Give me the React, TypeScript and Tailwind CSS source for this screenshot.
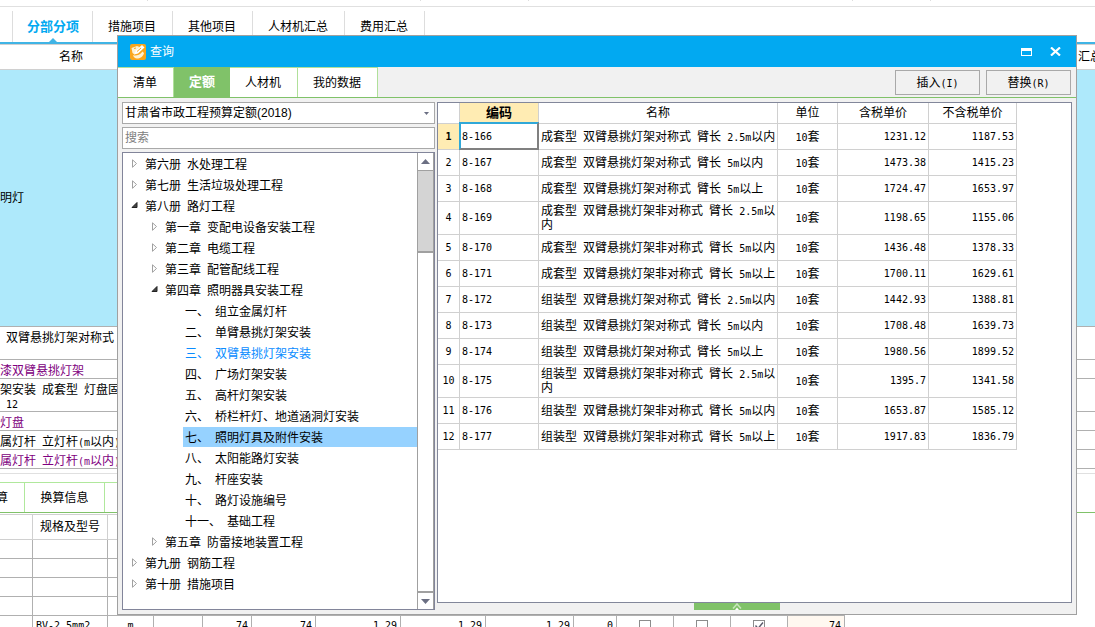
import React from "react";

const tabs = ["措施项目", "其他项目", "人材机汇总", "费用汇总"];

const tree = [
  { level: 0, name: "第六册 水处理工程", state: "closed" },
  { level: 0, name: "第七册 生活垃圾处理工程", state: "closed" },
  { level: 0, name: "第八册 路灯工程", state: "open" },
  { level: 1, name: "第一章 变配电设备安装工程", state: "closed" },
  { level: 1, name: "第二章 电缆工程", state: "closed" },
  { level: 1, name: "第三章 配管配线工程", state: "closed" },
  { level: 1, name: "第四章 照明器具安装工程", state: "open" },
  { level: 2, name: "一、 组立金属灯杆" },
  { level: 2, name: "二、 单臂悬挑灯架安装" },
  { level: 2, name: "三、 双臂悬挑灯架安装", current: true },
  { level: 2, name: "四、 广场灯架安装" },
  { level: 2, name: "五、 高杆灯架安装" },
  { level: 2, name: "六、 桥栏杆灯、地道涵洞灯安装" },
  { level: 2, name: "七、 照明灯具及附件安装", selected: true },
  { level: 2, name: "八、 太阳能路灯安装" },
  { level: 2, name: "九、 杆座安装" },
  { level: 2, name: "十、 路灯设施编号" },
  { level: 2, name: "十一、 基础工程" },
  { level: 1, name: "第五章 防雷接地装置工程", state: "closed" },
  { level: 0, name: "第九册 钢筋工程", state: "closed" },
  { level: 0, name: "第十册 措施项目", state: "closed" },
];

const indents = ["pl-2", "pl-7", "pl-[62px]"];

const quotas = [
  ["8-166", "成套型 双臂悬挑灯架对称式 臂长 2.5m以内", "1231.12", "1187.53"],
  ["8-167", "成套型 双臂悬挑灯架对称式 臂长 5m以内", "1473.38", "1415.23"],
  ["8-168", "成套型 双臂悬挑灯架对称式 臂长 5m以上", "1724.47", "1653.97"],
  ["8-169", "成套型 双臂悬挑灯架非对称式 臂长 2.5m以内", "1198.65", "1155.06"],
  ["8-170", "成套型 双臂悬挑灯架非对称式 臂长 5m以内", "1436.48", "1378.33"],
  ["8-171", "成套型 双臂悬挑灯架非对称式 臂长 5m以上", "1700.11", "1629.61"],
  ["8-172", "组装型 双臂悬挑灯架对称式 臂长 2.5m以内", "1442.93", "1388.81"],
  ["8-173", "组装型 双臂悬挑灯架对称式 臂长 5m以内", "1708.48", "1639.73"],
  ["8-174", "组装型 双臂悬挑灯架对称式 臂长 5m以上", "1980.56", "1899.52"],
  ["8-175", "组装型 双臂悬挑灯架非对称式 臂长 2.5m以内", "1395.7", "1341.58"],
  ["8-176", "组装型 双臂悬挑灯架非对称式 臂长 5m以内", "1653.87", "1585.12"],
  ["8-177", "组装型 双臂悬挑灯架非对称式 臂长 5m以上", "1917.83", "1836.79"],
];

// Latin runs are half as wide as the Chinese characters
function Mixed({ text }: { text: string }) {
  return (
    <>
      {text.split(/([\x20-\x7e]+)/).map((part, i) =>
        i % 2 ? (
          <span key={i} className="font-['DejaVu_Sans_Mono',monospace] text-[10px] leading-none">
            {part}
          </span>
        ) : (
          part
        )
      )}
    </>
  );
}

function Arrow({ state }: { state?: string }) {
  if (state === "open") {
    return (
      <svg width="14" height="10" viewBox="0 0 14 10" className="shrink-0">
        <path d="M6 1.5V6.500H1z" fill="#444" stroke="#222" />
      </svg>
    );
  }
  if (state === "closed") {
    return (
      <svg width="14" height="10" viewBox="0 0 14 10" className="shrink-0">
        <path d="M1.5 0.800v7.500L5.500 4.500z" fill="#fff" stroke="#a0a0a0" />
      </svg>
    );
  }
  return null;
}

function Workspace() {
  return (
    <div className="overflow-hidden">
      <div className="flex h-[7px] items-start border-b border-[#e0e0e0]">
        <span className="h-px w-[148px] border-r border-[#ddd]" />
        <span className="h-px w-[273px] border-r border-[#ddd]" />
        <span className="h-px w-[108px] border-r border-[#ddd]" />
        <span className="h-px w-[324px] border-r border-[#ddd]" />
        <span className="h-px w-[78px] border-r border-[#ddd]" />
      </div>
      <nav className="flex h-[37px] border-b-2 border-[#40b4e5] pt-1">
        <span className="h-[31px] w-[13px] border-r border-[#ddd]" />
        <button className="relative h-[31px] border-r border-[#ddd] pr-[13px] pl-[14px] text-[13px] font-bold text-[#02a9f1]">
          分部分项
          <svg width="8" height="4" viewBox="0 0 8 4" className="absolute bottom-0 left-9">
            <path d="M0 4L4 0l4 4z" fill="#40b4e5" />
          </svg>
        </button>
        {tabs.map((tab) => (
          <button key={tab} className="h-[31px] border-r border-[#ddd] pr-4 pl-[15px]">
            {tab}
          </button>
        ))}
      </nav>
      <div className="flex h-[26px] items-center justify-between border-y border-[#d0d0d0]">
        <span className="pl-[59px]">名称</span>
        <span className="w-[17px] whitespace-nowrap">汇总</span>
      </div>
      <div className="flex h-[257px] items-center border-b border-[#b0b0b0] bg-[#aee9fb]">明灯</div>
      <div className="h-[33px] border-b border-[#b0b0b0] pt-1 pl-1.5">双臂悬挑灯架对称式</div>
      <div className="h-[19px] border-b border-[#b0b0b0] pt-1 text-[#800080]">漆双臂悬挑灯架</div>
      <div className="h-[33px] border-b border-[#b0b0b0] pt-1">
        <p><Mixed text="架安装 成套型 灯盘固" /></p>
        <p className="pl-1.5"><Mixed text="12" /></p>
      </div>
      <div className="h-[19px] border-b border-[#b0b0b0] pt-1 text-[#800080]">灯盘</div>
      <div className="h-[19px] border-b border-[#b0b0b0] pt-1">
        <Mixed text="属灯杆 立灯杆(m以内)" />
      </div>
      <div className="h-[19px] border-b border-[#b0b0b0] pt-1 text-[#800080]">
        <Mixed text="属灯杆 立灯杆(m以内)" />
      </div>
      <div className="h-[5px] border-b border-[#e0e0e0]" />
      <div className="mt-2 flex h-[31px] border-b border-[#80c269]">
        <button className="w-[25px] border-t border-r border-[#b0e89c] pr-4 text-left">
          <span className="-ml-1">算</span>
        </button>
        <button className="w-20 border-t border-r border-[#b0e89c]">换算信息</button>
        <span className="w-20 border-t border-[#b0e89c]" />
      </div>
      <table className="mt-px w-[845px] table-fixed border-separate border-spacing-0">
        <colgroup>
          <col className="w-[33px]" />
          <col className="w-[75px]" />
          <col className="w-[46px]" />
          <col className="w-[49px]" />
          <col className="w-[49px]" />
          <col className="w-[64px]" />
          <col className="w-[85px]" />
          <col className="w-[85px]" />
          <col className="w-[88px]" />
          <col className="w-[43px]" />
          <col className="w-[57px]" />
          <col className="w-[57px]" />
          <col className="w-[57px]" />
          <col className="w-[57px]" />
        </colgroup>
        <thead>
          <tr className="h-[26px]">
            <th className="border-y border-r border-[#d0d0d0]" />
            <th className="border-y border-r border-[#d0d0d0] p-0 font-normal">规格及型号</th>
            <th colSpan={12} className="border-y border-[#d0d0d0]" />
          </tr>
        </thead>
        <tbody>
          {[1, 2, 3, 4].map((n) => (
            <tr key={n} className="h-[19px]">
              <td className="border-r border-b border-[#b0b0b0]" />
              <td className="border-r border-b border-[#b0b0b0]" />
              <td colSpan={12} className="border-b border-[#b0b0b0]" />
            </tr>
          ))}
          <tr className="h-[19px] text-right font-['DejaVu_Sans_Mono',monospace] text-[10px] *:border-r *:border-[#b0b0b0] *:px-[3px] *:py-0">
            <td />
            <td className="text-left">BV-2.5mm2</td>
            <td className="text-center">m</td>
            <td />
            <td>74</td>
            <td>74</td>
            <td>1.29</td>
            <td>1.29</td>
            <td>1.29</td>
            <td>0</td>
            <td><Tick label="暂估" /></td>
            <td><Tick label="锁定" /></td>
            <td><Tick label="输出" checked /></td>
            <td className="bg-[#fff8f0]">74</td>
          </tr>
        </tbody>
      </table>
    </div>
  );
}

function Tick({ label, checked }: { label: string; checked?: boolean }) {
  return (
    <span className="relative mx-auto block size-3">
      <input
        type="checkbox"
        aria-label={label}
        defaultChecked={checked}
        className="peer block size-3 appearance-none border border-[#8c8c8c] bg-white"
      />
      <svg viewBox="0 0 12 12" className="pointer-events-none absolute inset-0 hidden size-3 peer-checked:block">
        <path d="M2.5 5.5l2.5 3 5-6" fill="none" stroke="#5a5a6a" strokeWidth="1.4" />
      </svg>
    </span>
  );
}

function TreePanel() {
  return (
    <div className="flex min-h-0 flex-1 border border-[#82859a] bg-white">
      <ul className="min-w-0 flex-1 pt-px">
        {tree.map((node) => (
          <li key={node.name} className={`flex h-[21px] items-start ${indents[node.level]}`}>
            <span className="flex h-5 items-center">
              <Arrow state={node.state} />
            </span>
            <span
              className={`h-5 flex-1 pt-1 whitespace-pre ${
                node.level === 2 ? "-ml-0.5 pl-0.5" : ""
              } ${node.selected ? "bg-[#96d2ff]" : ""} ${node.current ? "text-[#0a8cff]" : ""}`}
            >
              <Mixed text={node.name} />
            </span>
          </li>
        ))}
      </ul>
      <div className="flex w-[17px] flex-col border-r border-l border-[#a0a0a0]">
        <button aria-label="向上" className="flex h-[18px] items-center justify-center border-b border-[#a0a0a0]">
          <svg width="9" height="5" viewBox="0 0 9 5">
            <path d="M0 5L4.500 0 9 5z" fill="#6b6f83" />
          </svg>
        </button>
        <div className="h-[82px] border-b-2 border-[#a0a0a0] bg-[#d4d4d4]" />
        <div className="flex-1" />
        <button aria-label="向下" className="flex h-[18px] items-center justify-center border-t-2 border-[#a0a0a0]">
          <svg width="9" height="5" viewBox="0 0 9 5">
            <path d="M0 0l4.500 5L9 0z" fill="#6b6f83" />
          </svg>
        </button>
      </div>
    </div>
  );
}

function QuotaTable() {
  return (
    <table className="w-[579px] table-fixed border-separate border-spacing-0">
      <colgroup>
        <col className="w-[22px]" />
        <col className="w-[79px]" />
        <col className="w-[239px]" />
        <col className="w-[60px]" />
        <col className="w-[91px]" />
        <col className="w-[88px]" />
      </colgroup>
      <thead>
        <tr className="h-[21px] *:border-r *:border-b *:border-[#d0d0d0] *:p-0 *:font-normal">
          <th />
          <th className="bg-[#ffecb3] text-[13px] font-bold!">编码</th>
          <th>名称</th>
          <th>单位</th>
          <th>含税单价</th>
          <th>不含税单价</th>
        </tr>
      </thead>
      <tbody>
        {quotas.map(([code, name, taxed, untaxed], i) => (
          <tr key={code} className="h-[26px] *:border-r *:border-b *:border-[#d0d0d0] *:px-0.5 *:py-0">
            <td
              className={`px-0! text-center font-['DejaVu_Sans_Mono',monospace] text-[10px] ${
                i === 0 ? "bg-[#ffecb3] font-bold" : ""
              }`}
            >
              {i + 1}
            </td>
            <td className="relative font-['DejaVu_Sans_Mono',monospace] text-[10px]">
              {code}
              {i === 0 && (
                <span className="absolute -top-0.5 -right-px -bottom-px -left-px border-2 border-t-[#30a8d8] border-r-[#808080] border-b-[#808080] border-l-[#30a8d8]" />
              )}
            </td>
            <td className="py-0.5! pr-0!"><Mixed text={name} /></td>
            <td className="text-center"><Mixed text="10套" /></td>
            <td className="text-right font-['DejaVu_Sans_Mono',monospace] text-[10px]">{taxed}</td>
            <td className="text-right font-['DejaVu_Sans_Mono',monospace] text-[10px]">{untaxed}</td>
          </tr>
        ))}
      </tbody>
    </table>
  );
}

function QueryDialog() {
  return (
    <section
      role="dialog"
      aria-label="查询"
      className="absolute top-[35px] right-[18px] left-[117px] flex h-[580px] flex-col border border-[#a0a0a0] bg-[#f1f1f1]"
    >
      <header className="flex h-[31px] items-center bg-[#02a9f1] pr-[13px] pl-3 text-white">
        <svg width="16" height="16" viewBox="0 0 16 16" className="mr-1">
          <rect width="16" height="16" rx="2" fill="#fba61b" />
          <path d="M1.500 4l5.500-2 2.500 1-4 4-1 3.500L2.500 9z" fill="#fff1cf" />
          <path d="M4 10.500l1.500-4L12 1l2.500 2.500L8 9.500z" fill="#fff" />
          <path d="M3 11c2 1 6 1 9.500-3.500L14 9c-1 4-4 5.500-7 5.500-2 0-3.500-1.500-4-3.500z" fill="#fff1cf" />
          <path d="M7 7.500l4-3.500M4 4.500l2-0.500" stroke="#fba61b" />
        </svg>
        <h1 className="flex-1">查询</h1>
        <button aria-label="最大化" className="mr-[18px]">
          <svg width="11" height="8" viewBox="0 0 11 8">
            <path d="M0 0h11v8H0zM1 3v4h9V3z" fill="#fff" fillRule="evenodd" />
          </svg>
        </button>
        <button aria-label="关闭" className="mr-0.5">
          <svg width="11" height="9" viewBox="0 0 11 9">
            <path d="M1 0.500l9 8M10 0.500l-9 8" stroke="#fff" strokeWidth="2.200" />
          </svg>
        </button>
      </header>
      <div className="flex h-[31px] border-b border-[#80c269]">
        <button className="border-t border-r border-[#b0e09a] bg-white pr-4 pl-[15px]">清单</button>
        <button className="bg-[#80c269] px-[15px] text-[13px] font-bold text-white">定额</button>
        <button className="border-t border-r border-[#b0e09a] bg-white pr-4 pl-[15px]">人材机</button>
        <button className="border-t border-r border-[#b0e09a] bg-white pr-4 pl-[15px]">我的数据</button>
        <div className="ml-auto flex gap-1.5 pt-[3px] pr-[5px]">
          <button className="h-[25px] w-[85px] border border-[#a9a9a9]"><Mixed text="插入(I)" /></button>
          <button className="h-[25px] w-[85px] border border-[#a9a9a9]"><Mixed text="替换(R)" /></button>
        </div>
      </div>
      <div className="flex min-h-0 flex-1 gap-0.5 px-1 pt-1 pb-1">
        <div className="flex w-[313px] flex-col">
          <div className="relative mb-[3px] h-[22px]">
            <select
              aria-label="定额库"
              className="h-full w-full appearance-none border border-[#a9a9a9] bg-white px-0.5 outline-none"
            >
              <option>甘肃省市政工程预算定额(2018)</option>
            </select>
            <svg width="5" height="3" viewBox="0 0 5 3" className="pointer-events-none absolute top-[10px] right-1.5">
              <path d="M0 0h5L2.500 3z" fill="#6b6f83" />
            </svg>
          </div>
          <input
            type="text"
            aria-label="搜索"
            placeholder="搜索"
            className="mb-[3px] h-[22px] border border-[#a9a9a9] bg-white px-0.5 outline-none placeholder:text-[#808080]"
          />
          <TreePanel />
        </div>
        <div className="flex min-w-0 flex-1 flex-col">
          <div className="min-h-0 flex-1 border border-[#82879a] bg-white">
            <QuotaTable />
          </div>
          <button
            aria-label="展开"
            className="mr-9 flex h-[7px] w-[86px] items-center justify-center self-center bg-[#80c269]"
          >
            <svg width="10" height="7" viewBox="0 0 10 7">
              <path d="M1 5.500L5 1l4 4.500" fill="none" stroke="#c8e6bc" strokeWidth="1.500" />
              <path d="M3 7l2-2.500L7 7z" fill="#fff" />
            </svg>
          </button>
        </div>
      </div>
    </section>
  );
}

export default function App() {
  return (
    <main className="relative h-screen overflow-hidden bg-white font-['Liberation_Sans','Noto_Sans_CJK_SC',sans-serif] text-[12px] leading-[14px] text-black">
      <Workspace />
      <QueryDialog />
    </main>
  );
}
